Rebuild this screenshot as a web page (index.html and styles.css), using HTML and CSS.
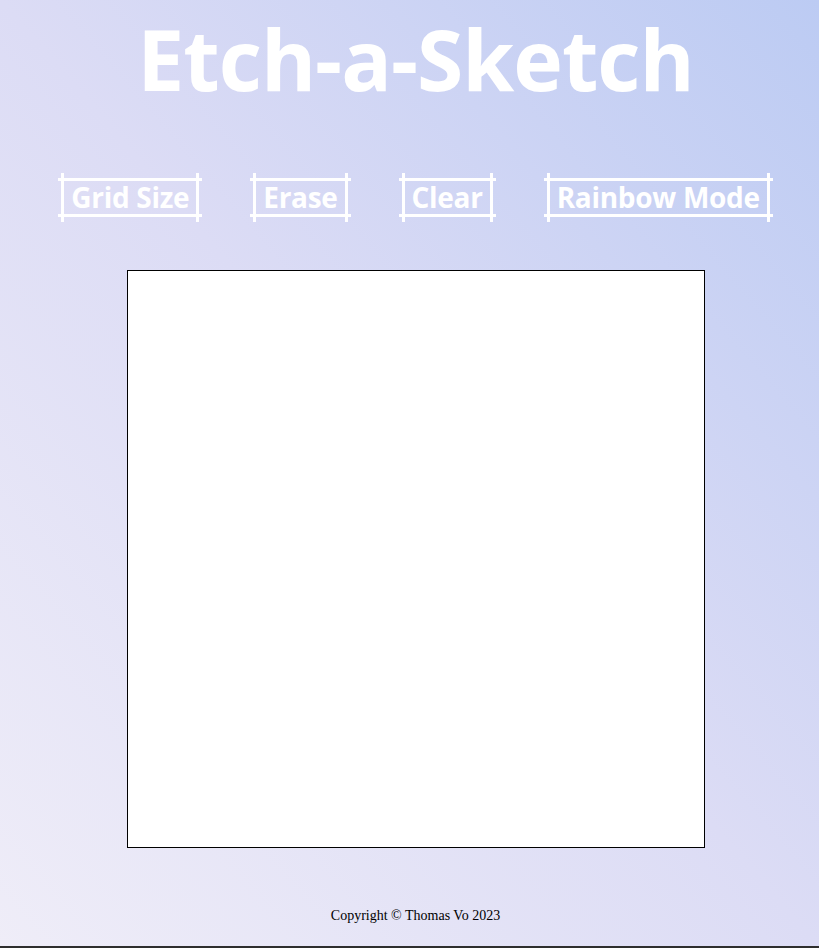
FILE: index.html
```html
<!DOCTYPE html>
<html lang="en">
<head>
  <meta charset="UTF-8" />
  <meta name="viewport" content="width=device-width, initial-scale=1.0" />
  <title>Etch-a-Sketch</title>
  <link rel="stylesheet" href="styles.css">
</head>
<body>
  <div class="page">
    <h1 class="title">Etch-a-Sketch</h1>
    <div class="controls">
      <button class="sketch-btn" id="gridBtn">Grid Size</button>
      <button class="sketch-btn" id="eraseBtn">Erase</button>
      <button class="sketch-btn" id="clearBtn">Clear</button>
      <button class="sketch-btn" id="rainbowBtn">Rainbow Mode</button>
    </div>
    <div class="board" id="board"></div>
    <footer class="footer">Copyright &copy; Thomas Vo 2023</footer>
  </div>
</body>
</html>
```

FILE: styles.css
```css
html, body { margin: 0; padding: 0; }
body { background: linear-gradient(to top right, #efedf8 0%, #dcdcf5 50%, #bccbf3 100%); min-height: 100vh; }
.page { box-sizing: border-box; min-height: 100vh; padding-left: 12px; display: flex; flex-direction: column; align-items: center; border-bottom: 2px solid #2e2e2e; }

.title { margin: 6px 0 0; font-family: "Open Sans", sans-serif; font-weight: 700; font-size: 84px; line-height: 106px; color: white; letter-spacing: -1px; }

.controls { display: flex; gap: 54px; margin-top: 66px; }
.sketch-btn { position: relative; background: transparent; border: none; color: white; font-family: "Open Sans", sans-serif; font-weight: 700; font-size: 28px; line-height: 33px; padding: 3px 10px; letter-spacing: -0.3px; cursor: pointer; }
.sketch-btn::before { content: ""; position: absolute; top: 0; bottom: 0; left: -3px; right: -3px; border-top: 3px solid white; border-bottom: 3px solid white; }
.sketch-btn::after { content: ""; position: absolute; top: -5px; bottom: -5px; left: 0; right: 0; border-left: 3px solid white; border-right: 3px solid white; }

.board { box-sizing: border-box; width: 578px; height: 578px; margin-top: 53px; background: white; border: 1px solid black; }

.footer { margin-top: 60px; font-family: "Liberation Serif", serif; font-size: 14px; color: black; }
```
